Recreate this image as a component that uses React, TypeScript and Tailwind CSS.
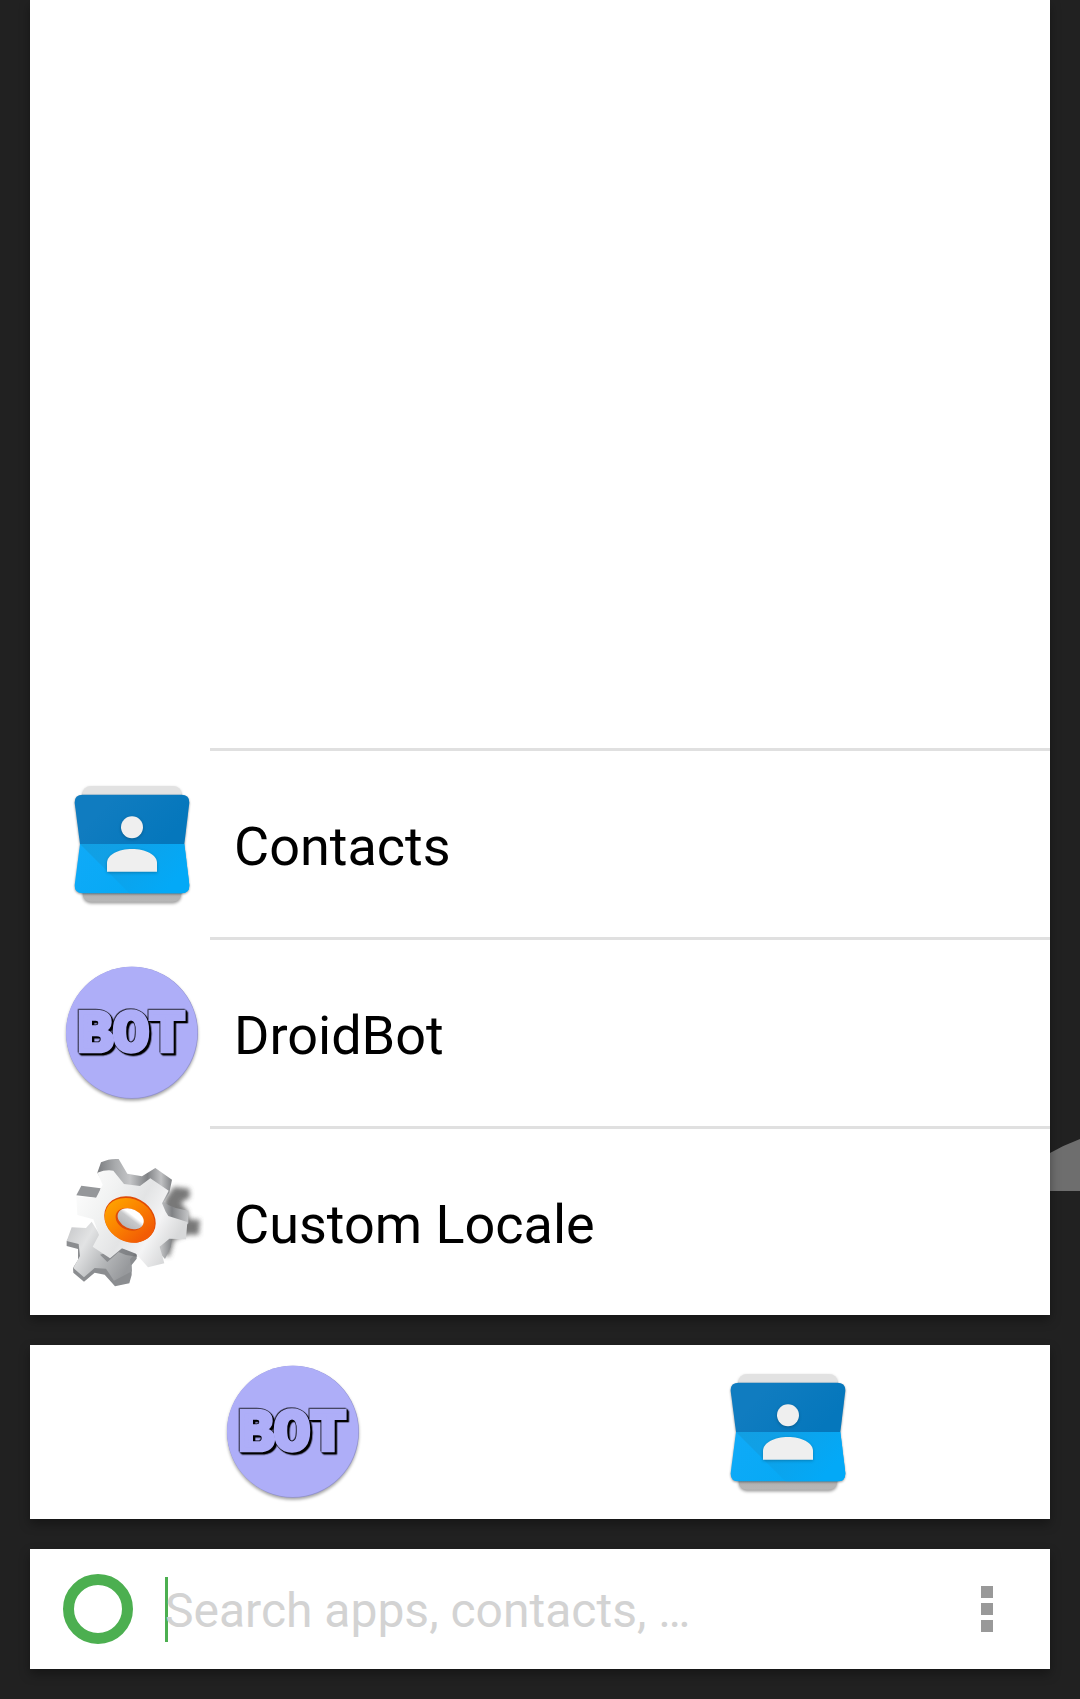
import { useId } from "react";

function ContactsIcon() {
  const id = useId();
  const upper = id + "upper";
  const lower = id + "lower";
  const fold = id + "fold";
  const back = id + "back";
  return (
    <svg viewBox="30 6 432 432" className="size-36 shrink-0" aria-hidden="true">
      <defs>
        <linearGradient id={upper} x1="0" y1="0" x2="1" y2="0.4">
          <stop offset="0.3" stopColor="#107cc0" />
          <stop offset="1" stopColor="#0577bc" />
        </linearGradient>
        <linearGradient id={lower} x1="0" y1="0" x2="1" y2="0.4">
          <stop offset="0" stopColor="#10aaf8" />
          <stop offset="1" stopColor="#03a9f4" />
        </linearGradient>
        <linearGradient id={fold} x1="0" y1="0" x2="1" y2="0.4">
          <stop offset="0" stopColor="#129fe2" />
          <stop offset="0.3" stopColor="#10a0e6" />
          <stop offset="1" stopColor="#03a9f7" />
        </linearGradient>
        <linearGradient id={back} x1="0" y1="0" x2="0" y2="1">
          <stop offset="0.5" stopColor="#e2e2e2" />
          <stop offset="0.52" stopColor="#a6a6a6" />
          <stop offset="1" stopColor="#b6b6b6" />
        </linearGradient>
      </defs>
      <rect x="98" y="48" width="296" height="347" rx="24" fill={`url(#${back})`} className="[filter:drop-shadow(0_5px_4px_rgba(0,0,0,0.4))]" />
      <g className="[filter:drop-shadow(0_3px_3px_rgba(0,0,0,0.4))]">
        <path d="M98 74H394Q419 74 418 98L403 222H90L74 98Q73 74 98 74Z" fill={`url(#${upper})`} />
        <path d="M90 222H403L418 345Q419 370 394 370H98Q73 370 74 345Z" fill={`url(#${lower})`} />
      </g>
      <path d="M90 222H403L418 345Q419 370 394 370H238Z" fill={`url(#${fold})`} />
      <g fill="#efefef" className="[filter:drop-shadow(0_3px_4px_rgba(0,0,0,0.25))]">
        <circle cx="246" cy="172" r="33" />
        <path d="M171 305V277C173 254 205 237 246 237S319 254 321 277V305Z" />
      </g>
    </svg>
  );
}

function BotIcon() {
  return (
    <svg viewBox="30 33 432 432" className="size-36 shrink-0" aria-hidden="true">
      <circle cx="246" cy="248" r="198" fill="#9292cf" className="[filter:drop-shadow(0_6px_4px_rgba(0,0,0,0.35))]" />
      <circle cx="245" cy="247" r="197" fill="#aeaef8" />
      <text
        x="243"
        y="303"
        textAnchor="middle"
        fontSize="180"
        fill="#aeaef8"
        stroke="#aeaef8"
        strokeWidth="14"
        strokeLinejoin="miter"
        className="font-['Liberation_Mono',monospace] font-bold [filter:drop-shadow(-2px_-2px_0_#000)_drop-shadow(3px_3px_0_#000)_drop-shadow(4px_4px_0_#000)]"
      >
        BOT
      </text>
    </svg>
  );
}

function GearIcon() {
  const id = useId();
  const face = id + "face";
  const side = id + "side";
  const rear = id + "rear";
  const ring = id + "ring";
  const hole = id + "hole";
  const blur = id + "blur";
  return (
    <svg viewBox="30 30 432 432" className="size-36 shrink-0" aria-hidden="true">
      <defs>
        <linearGradient id={face} x1="0" y1="0" x2="1" y2="0.5">
          <stop offset="0" stopColor="#ffffff" />
          <stop offset="0.35" stopColor="#f1f2f2" />
          <stop offset="0.6" stopColor="#e3e4e5" />
          <stop offset="0.8" stopColor="#f4f4f5" />
          <stop offset="1" stopColor="#d8d9da" />
        </linearGradient>
        <linearGradient id={side} x1="0" y1="0" x2="1" y2="0">
          <stop offset="0" stopColor="#7b7d80" />
          <stop offset="0.2" stopColor="#a9abad" />
          <stop offset="0.36" stopColor="#c4c5c7" />
          <stop offset="0.55" stopColor="#808285" />
          <stop offset="0.7" stopColor="#c0c1c3" />
          <stop offset="0.82" stopColor="#808285" />
          <stop offset="1" stopColor="#c4c5c7" />
        </linearGradient>
        <linearGradient id={rear} x1="0" y1="0" x2="1" y2="0.5">
          <stop offset="0" stopColor="#c4c5c7" />
          <stop offset="0.35" stopColor="#e2e3e4" />
          <stop offset="0.7" stopColor="#b4b6b8" />
          <stop offset="1" stopColor="#97999c" />
        </linearGradient>
        <linearGradient id={ring} x1="0" y1="0" x2="1" y2="0.3">
          <stop offset="0" stopColor="#ffa800" />
          <stop offset="0.5" stopColor="#fb8500" />
          <stop offset="1" stopColor="#f25c05" />
        </linearGradient>
        <linearGradient id={hole} x1="0.3" y1="1" x2="0.6" y2="0">
          <stop offset="0" stopColor="#b4b5b7" />
          <stop offset="0.5" stopColor="#c8c9cb" />
          <stop offset="0.7" stopColor="#ffffff" />
          <stop offset="1" stopColor="#ffffff" />
        </linearGradient>
        <filter id={blur} x="-30%" y="-30%" width="160%" height="160%">
          <feGaussianBlur stdDeviation="8" />
        </filter>
      </defs>
      <g fill="#4b4b4b" opacity="0.75" filter={`url(#${blur})`}>
        <path d="M345 178L372 140L418 146L420 172L392 188L412 212L418 238L450 240L446 284L412 284L372 300L358 350L335 340L340 220Z" />
      </g>
      <path d="M50 303L65 280L147 293L260 340V356L245 375V405L238 430L195 439L164 404L134 398L102 425L70 398L69 384L84 360L84 327L50 318Z" fill="#8b8d90" />
      <path d="M50 303L65 262L108 264L125 245L150 285L262 334L240 358L246 394L192 422L168 386L134 384L102 412L70 384L90 348L86 312Z" fill={`url(#${rear})`} />
      <path d="M150 344L215 325L258 336L262 350L228 345L206 336L172 366Z" fill="#606265" opacity="0.5" />
      <path d="M79 166L94 137L152 145L145 174Z" fill="#95979a" />
      <path
        d="M142 98L153 67Q178 55 206 57L232 101L276 109L316 84L366 119L358 158L342 186L355 195L377 204L415 212V250L365 300L362 322L345 357L330 340L200 200Z"
        fill={`url(#${side})`}
      />
      <path
        d="M142 98Q168 88 190 92L222 132L270 138L301 115L356 152L336 190L347 215L355 228L412 246L408 298L358 296L329 320L343 370L294 382L258 341L216 325L180 355L128 320L147 285L130 238L82 225L79 170L138 174L158 134Z"
        fill={`url(#${face})`}
      />
      <ellipse cx="240" cy="238" rx="80" ry="66" transform="rotate(28 240 238)" fill="#e04a05" />
      <ellipse cx="239" cy="241" rx="78" ry="64" transform="rotate(28 239 241)" fill={`url(#${ring})`} />
      <ellipse cx="238" cy="238" rx="43" ry="32" transform="rotate(25 238 238)" fill="#df4b08" />
      <ellipse cx="242" cy="236" rx="41" ry="29" transform="rotate(25 242 236)" fill={`url(#${hole})`} />
    </svg>
  );
}

const apps = [
  { name: "Contacts", Icon: ContactsIcon },
  { name: "DroidBot", Icon: BotIcon },
  { name: "Custom Locale", Icon: GearIcon },
];

const favorites = [
  { name: "DroidBot", Icon: BotIcon },
  { name: "Contacts", Icon: ContactsIcon },
];

export default function App() {
  return (
    <div className="relative flex min-h-screen flex-col gap-[30px] overflow-hidden bg-[#212121] px-[30px] pb-[30px] font-['Roboto',sans-serif]">
      <svg viewBox="0 0 30 52" className="absolute right-0 bottom-[508px] h-[52px] w-[30px]" aria-hidden="true">
        <path d="M0 14Q14 6 30 0V52H0Z" fill="#6e6e6e" />
      </svg>

      <main className="relative flex flex-1 flex-col justify-end bg-white shadow-[0_5px_10px_rgba(0,0,0,0.35)]">
        <ul>
          {apps.map(({ name, Icon }) => (
            <li key={name}>
              <div className="ml-[180px] h-[3px] bg-[#e0e0e0]" />
              <button type="button" className="flex h-[186px] w-full items-center gap-[30px] px-[30px] text-left">
                <Icon />
                <span className="pt-1.5 text-[54px] leading-[64px] text-black">{name}</span>
              </button>
            </li>
          ))}
        </ul>
      </main>

      <nav aria-label="Favorites" className="relative flex h-[174px] items-center bg-white px-[15px] shadow-[0_5px_10px_rgba(0,0,0,0.35)]">
        {favorites.map(({ name, Icon }) => (
          <button key={name} type="button" aria-label={name} className="flex flex-1 justify-center">
            <Icon />
          </button>
        ))}
      </nav>

      <form
        role="search"
        onSubmit={(event) => event.preventDefault()}
        className="relative flex h-[120px] items-center bg-white pr-[18px] pl-[33px] shadow-[0_5px_10px_rgba(0,0,0,0.35)]"
      >
        <button type="button" aria-label="Show all apps" className="size-[70px] shrink-0 rounded-full border-[11px] border-[#4caf50]" />
        <div className="relative ml-8 flex flex-1 items-center">
          <span className="absolute left-0 h-[65px] w-[3px] bg-[#4caf50]" />
          <input
            type="text"
            aria-label="Search"
            placeholder="Search apps, contacts, …"
            className="relative w-full bg-transparent pt-1 text-[48px] leading-[60px] text-black outline-none placeholder:text-[#d3d3d3]"
          />
        </div>
        <button type="button" aria-label="Menu" className="flex h-[90px] w-[90px] shrink-0 flex-col items-center justify-center gap-[5px]">
          <span className="size-3 bg-[#999999]" />
          <span className="size-3 bg-[#999999]" />
          <span className="size-3 bg-[#999999]" />
        </button>
      </form>
    </div>
  );
}
